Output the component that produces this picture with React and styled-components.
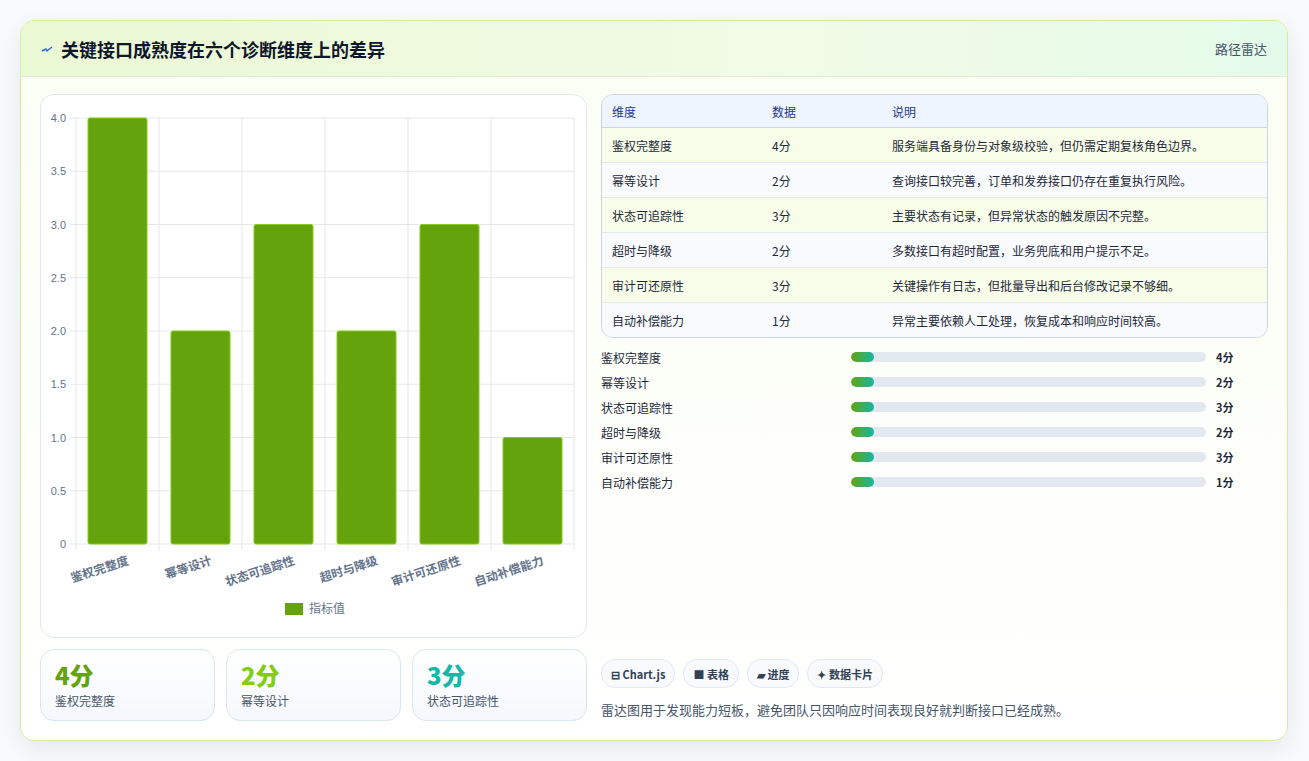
import React from "react";
import styled, { createGlobalStyle } from "styled-components";

const GlobalStyle = createGlobalStyle`
  body {
    margin: 0;
    background: #f8fafc;
    font-family: "Noto Sans CJK SC", "Noto Sans", sans-serif;
  }
`;

const rows = [
  { name: "鉴权完整度", v: 4, note: "服务端具备身份与对象级校验，但仍需定期复核角色边界。" },
  { name: "幂等设计", v: 2, note: "查询接口较完善，订单和发券接口仍存在重复执行风险。" },
  { name: "状态可追踪性", v: 3, note: "主要状态有记录，但异常状态的触发原因不完整。" },
  { name: "超时与降级", v: 2, note: "多数接口有超时配置，业务兜底和用户提示不足。" },
  { name: "审计可还原性", v: 3, note: "关键操作有日志，但批量导出和后台修改记录不够细。" },
  { name: "自动补偿能力", v: 1, note: "异常主要依赖人工处理，恢复成本和响应时间较高。" },
];

const Page = styled.div`
  padding: 20px 21px 21px 20px;
`;
const Card = styled.div`
  border: 1px solid #d4ed9f;
  border-radius: 14px;
  background: linear-gradient(180deg, #fbfef3 0%, #ffffff 100%);
  box-shadow: 0 8px 24px rgba(15, 23, 42, 0.08);
  overflow: hidden;
`;
const Header = styled.div`
  height: 55px;
  display: flex;
  align-items: center;
  justify-content: space-between;
  padding: 0 20px;
  background: linear-gradient(90deg, #eaf8d4 0%, #f2fbe6 60%, #e4fbe9 100%);
  border-bottom: 1px solid #e2ecd6;
`;
const Title = styled.h1`
  margin: 0;
  font-size: 18px;
  font-weight: 700;
  color: #0f172a;
  display: flex;
  align-items: center;
  gap: 8px;
`;
const Tag = styled.span`
  font-size: 13px;
  color: #475569;
`;
const Body = styled.div`
  display: grid;
  grid-template-columns: 547px 1fr;
  gap: 14px;
  padding: 17px 19px 19px 19px;
`;
const Col = styled.div`
  display: flex;
  flex-direction: column;
`;
const ChartPanel = styled.div`
  height: 542px;
  border: 1px solid #e2e8f0;
  border-radius: 14px;
  background: #fff;
`;
const Stats = styled.div`
  display: grid;
  grid-template-columns: repeat(3, 1fr);
  gap: 11px;
  margin-top: 11px;
`;
const Stat = styled.div`
  height: 72px;
  box-sizing: border-box;
  border: 1px solid #dbe5f0;
  border-radius: 14px;
  background: linear-gradient(180deg, #fff 0%, #f5f8fc 100%);
  padding: 10px 14px;
`;
const StatNum = styled.div`
  font-size: 24px;
  font-weight: 800;
  line-height: 30px;
  color: ${(p) => p.$c};
`;
const StatLabel = styled.div`
  font-size: 12px;
  color: #475569;
  margin-top: 2px;
`;
const Table = styled.div`
  border: 1px solid #cbd5e1;
  border-radius: 12px;
  overflow: hidden;
`;
const Row = styled.div`
  display: grid;
  grid-template-columns: 160px 120px 1fr;
  height: 34px;
  align-items: center;
  padding: 0 10px;
  font-size: 12px;
  color: #1e293b;
  background: ${(p) => (p.$head ? "#eef5fe" : p.$alt ? "#f8fafc" : "#f7fde9")};
  border-top: ${(p) => (p.$first ? "none" : "1px solid #e2e8f0")};
  ${(p) => p.$head && "color: #1e3a8a; height: 32px; border-bottom: 1px solid #cbd5e1;"}
`;
const Bars = styled.div`
  display: flex;
  flex-direction: column;
  gap: 7px;
  margin-top: 10px;
`;
const BarRow = styled.div`
  display: grid;
  grid-template-columns: 250px 1fr 62px;
  align-items: center;
  height: 18px;
  font-size: 12px;
  color: #1e293b;
`;
const Track = styled.div`
  height: 10px;
  border-radius: 5px;
  background: #e2e8f0;
  overflow: hidden;
`;
const Fill = styled.div`
  height: 100%;
  border-radius: 5px;
  background: linear-gradient(90deg, #65a30d, #14b8a6);
`;
const Val = styled.span`
  font-weight: 700;
  padding-left: 10px;
  font-size: 11px;
`;
const Foot = styled.div`
  margin-top: auto;
`;
const Chips = styled.div`
  display: flex;
  gap: 8px;
`;
const Chip = styled.span`
  height: 27px;
  display: inline-flex;
  align-items: center;
  gap: 4px;
  padding: 0 9px;
  border: 1px solid #e2e8f0;
  border-radius: 14px;
  background: #f8fafc;
  font-size: 11px;
  font-weight: 700;
  color: #334155;
`;
const Note = styled.p`
  margin: 12px 0 2px;
  font-size: 13px;
  color: #475569;
`;

function Chart() {
  const L = 35, R = 533, T = 23, B = 449, cw = (R - L) / 6;
  const y = (v) => B - (v / 4) * (B - T);
  const ticks = [0, 0.5, 1, 1.5, 2, 2.5, 3, 3.5, 4];
  return (
    <svg width="545" height="540" style={{ display: "block" }}>
      {ticks.map((t) => (
        <g key={t}>
          <line x1={L - 6} x2={R} y1={y(t)} y2={y(t)} stroke="#e5e7eb" />
          <text x={L - 10} y={y(t) + 4} fontSize="11" fill="#64748b" textAnchor="end" fontFamily="Liberation Sans">
            {t === 0 ? "0" : t.toFixed(1)}
          </text>
        </g>
      ))}
      {[0, 1, 2, 3, 4, 5, 6].map((i) => (
        <line key={i} x1={L + i * cw} x2={L + i * cw} y1={T} y2={B + 6} stroke="#e5e7eb" />
      ))}
      {rows.map((r, i) => (
        <g key={r.name}>
          <rect x={L + i * cw + 12} y={y(r.v)} width={cw - 24} height={B - y(r.v)} rx="2" fill="#65a30d" stroke="#84cc16" strokeWidth="1" />
          <text
            transform={`translate(${L + i * cw + cw / 2 + 12}, ${B + 20}) rotate(-18)`}
            fontSize="12"
            fontWeight="700"
            fill="#64748b"
            textAnchor="end"
          >
            {r.name}
          </text>
        </g>
      ))}
      <rect x="244" y="508" width="18" height="12" fill="#65a30d" />
      <text x="268" y="518" fontSize="12" fill="#64748b">指标值</text>
    </svg>
  );
}

export default function App() {
  return (
    <Page>
      <GlobalStyle />
      <Card>
        <Header>
          <Title>
            <svg width="12" height="10" viewBox="0 0 12 10">
              <path d="M1 7 L5 5 L6 7 L11 3" stroke="#2563eb" strokeWidth="1.4" fill="none" />
            </svg>
            关键接口成熟度在六个诊断维度上的差异
          </Title>
          <Tag>路径雷达</Tag>
        </Header>
        <Body>
          <Col>
            <ChartPanel>
              <Chart />
            </ChartPanel>
            <Stats>
              <Stat>
                <StatNum $c="#65a30d">4分</StatNum>
                <StatLabel>鉴权完整度</StatLabel>
              </Stat>
              <Stat>
                <StatNum $c="#84cc16">2分</StatNum>
                <StatLabel>幂等设计</StatLabel>
              </Stat>
              <Stat>
                <StatNum $c="#14b8a6">3分</StatNum>
                <StatLabel>状态可追踪性</StatLabel>
              </Stat>
            </Stats>
          </Col>
          <Col>
            <Table>
              <Row $head $first>
                <span>维度</span>
                <span>数据</span>
                <span>说明</span>
              </Row>
              {rows.map((r, i) => (
                <Row key={r.name} $alt={i % 2 === 1} $first={i === 0}>
                  <span>{r.name}</span>
                  <span>{r.v}分</span>
                  <span>{r.note}</span>
                </Row>
              ))}
            </Table>
            <Bars>
              {rows.map((r) => (
                <BarRow key={r.name}>
                  <span>{r.name}</span>
                  <Track>
                    <Fill style={{ width: "6.5%" }} />
                  </Track>
                  <Val>{r.v}分</Val>
                </BarRow>
              ))}
            </Bars>
            <Foot>
              <Chips>
                <Chip>⊟ Chart.js</Chip>
                <Chip>■ 表格</Chip>
                <Chip>▰ 进度</Chip>
                <Chip>✦ 数据卡片</Chip>
              </Chips>
              <Note>雷达图用于发现能力短板，避免团队只因响应时间表现良好就判断接口已经成熟。</Note>
            </Foot>
          </Col>
        </Body>
      </Card>
    </Page>
  );
}
